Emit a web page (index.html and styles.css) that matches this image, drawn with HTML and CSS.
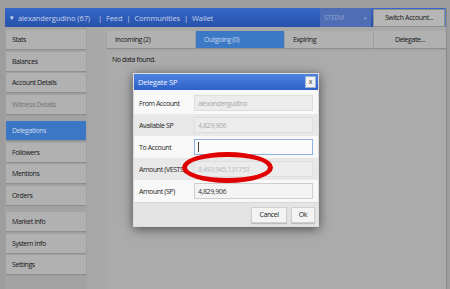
FILE: index.html
```html
<!DOCTYPE html>
<html lang="en">

<head>
    <meta charset="UTF-8">
    <title>Wallet - Delegations</title>
    <link rel="stylesheet" href="styles.css">
</head>

<body>
    <div class="window">
        <div class="topbar">
            <div class="nav">
                <span class="caret-down">&#9662;</span>
                <span class="account">alexandergudino (67)</span>
                <span class="sep">|</span>
                <span>Feed</span>
                <span class="sep">|</span>
                <span>Communities</span>
                <span class="sep">|</span>
                <span>Wallet</span>
            </div>
            <div class="chain-select">
                <span>STEEM</span>
                <span class="dot">&#9662;</span>
            </div>
            <button class="switch-btn">Switch Account...</button>
        </div>

        <div class="layout">
            <div class="sidebar">
                <div class="group">
                    <div class="side-item">Stats</div>
                    <div class="side-item">Balances</div>
                    <div class="side-item">Account Details</div>
                    <div class="side-item disabled">Witness Details</div>
                </div>
                <div class="group">
                    <div class="side-item active">Delegations</div>
                    <div class="side-item">Followers</div>
                    <div class="side-item">Mentions</div>
                    <div class="side-item">Orders</div>
                </div>
                <div class="group">
                    <div class="side-item">Market Info</div>
                    <div class="side-item">System Info</div>
                    <div class="side-item">Settings</div>
                </div>
            </div>

            <div class="main">
                <div class="tabs">
                    <div class="tab">Incoming (2)</div>
                    <div class="tab active">Outgoing (0)</div>
                    <div class="tab">Expiring</div>
                    <button class="tab delegate">Delegate...</button>
                </div>
                <div class="panel">No data found.</div>
            </div>
        </div>
    </div>

    <div class="dialog">
        <div class="dialog-title">
            <span>Delegate SP</span>
            <span class="close">x</span>
        </div>
        <div class="dialog-body">
            <div class="row">
                <label>From Account</label>
                <input class="field" type="text" value="alexandergudino" disabled>
            </div>
            <div class="row striped">
                <label>Available SP</label>
                <input class="field" type="text" value="4,829,906" disabled>
            </div>
            <div class="row">
                <label>To Account</label>
                <div class="focus-wrap">
                    <input class="field focus" type="text" value="">
                </div>
            </div>
            <div class="row striped">
                <label>Amount (VESTS)</label>
                <input class="field faint" type="text" value="8,493,945.131753" disabled>
            </div>
            <div class="row">
                <label>Amount (SP)</label>
                <input class="field value" type="text" value="4,829,906">
            </div>
        </div>
        <div class="dialog-footer">
            <button class="dlg-btn">Cancel</button>
            <button class="dlg-btn">Ok</button>
        </div>
        <div class="highlight"></div>
    </div>
</body>

</html>
```

FILE: styles.css
```css
body {
    margin: 0;
    background: #9d9d9d;
    font-family: 'Open Sans', sans-serif;
    font-size: 7px;
    letter-spacing: -0.4px;
    color: #161616;
    width: 450px;
    height: 289px;
    overflow: hidden;
    position: relative;
}

button,
input {
    font-family: inherit;
    font-size: 7px;
    letter-spacing: inherit;
}

.window {
    margin: 8px 3px 0 5px;
    height: 281px;
    background: #a8a8a8;
    border-right: 1px solid #8a8a8a;
    display: flex;
    flex-direction: column;
}

/* top bar */
.topbar {
    height: 19px;
    display: flex;
    align-items: center;
    background: linear-gradient(to bottom, #3566c8, #2752ab);
    color: #c9d3ea;
    border-right: 1px solid #5a7cc4;
}

.nav {
    flex: 1;
    display: flex;
    align-items: center;
    gap: 4px;
    padding-left: 5px;
    font-size: 7.5px;
    letter-spacing: -0.1px;
}

.caret-down {
    font-size: 7px;
    color: #d8e0f2;
}

.account {
    margin-right: 4px;
}

.chain-select {
    width: 51px;
    height: 19px;
    box-sizing: border-box;
    display: flex;
    align-items: center;
    justify-content: space-between;
    padding: 0 4px;
    background: #4e6db4;
    color: #8fa4cf;
}

.chain-select .dot {
    font-size: 5px;
}

.switch-btn {
    width: 72px;
    height: 18px;
    margin-left: 2px;
    border: 1px solid #8d8d8d;
    background: #b6b6b6;
    color: #161616;
    padding: 0;
}

/* body */
.layout {
    flex: 1;
    display: flex;
}

.sidebar {
    width: 82px;
    background: #a3a3a3;
    padding: 3px 1px 0 1px;
    box-sizing: border-box;
}

.group {
    margin-bottom: 7.5px;
}

.side-item {
    height: 19px;
    margin-bottom: 2.5px;
    line-height: 19px;
    padding-left: 6px;
    background: #b1b1b1;
    box-shadow: 0 1px 1px #8e8e8e;
}

.side-item.disabled {
    color: #767676;
}

.side-item.active {
    background: #3b77c5;
    color: #d0dcef;
}

.main {
    flex: 1;
    padding: 4px 0 0 20px;
}

.tabs {
    display: flex;
    gap: 1px;
}

.tab {
    width: 88px;
    height: 17px;
    line-height: 17px;
    padding-left: 8px;
    box-sizing: border-box;
    background: #b1b1b1;
    box-shadow: 0 1px 1px #8e8e8e;
}

.tab.active {
    background: #3b79c5;
    color: #c6d6ee;
}

.tab.delegate {
    flex: 1;
    width: auto;
    padding: 0;
    border: none;
    color: #161616;
    text-align: center;
}

.panel {
    margin-top: 3px;
    height: 230px;
    background: #ababab;
    padding: 4px 5px;
}

/* dialog */
.dialog {
    position: absolute;
    left: 133px;
    top: 73px;
    width: 186px;
    height: 154px;
    box-sizing: border-box;
    background: #f5f5f5;
    border: 1px solid #dcdcdc;
    box-shadow: 0 2px 10px rgba(0, 0, 0, 0.55);
    display: flex;
    flex-direction: column;
}

.dialog-title {
    height: 16px;
    display: flex;
    align-items: center;
    justify-content: space-between;
    padding: 0 2px 0 4px;
    background: linear-gradient(to bottom, #4d82e2, #2e61c8);
    color: #eef3ff;
    font-size: 7.5px;
    letter-spacing: -0.2px;
}

.close {
    width: 9px;
    height: 10px;
    line-height: 9px;
    text-align: center;
    background: #f2f2f2;
    border: 1px solid #9fb2d8;
    color: #333;
    font-size: 7px;
    letter-spacing: 0;
}

.dialog-body {
    padding-top: 2px;
    background: #f8f8f8;
}

.row {
    height: 22px;
    display: flex;
    align-items: center;
    padding: 0 5px;
}

.row.striped {
    background: #e8e8e8;
}

.row label {
    width: 55px;
    white-space: nowrap;
    color: #1e1e1e;
}

.field {
    width: 119px;
    height: 16px;
    box-sizing: border-box;
    border: 1px solid #dedede;
    background: #ececec;
    color: #a9a9a9;
    padding: 0 3px;
    margin: 0;
}

.field.faint {
    color: #b9b9b9;
}

.field.focus {
    background: #fafafa;
    border-color: #8fb0e2;
    outline: none;
}

.field.value {
    background: #f4f4f4;
    border-color: #cfcfcf;
    color: #333;
}

.focus-wrap {
    position: relative;
    display: flex;
}

.focus-wrap::after {
    content: "";
    position: absolute;
    left: 4px;
    top: 3px;
    width: 1px;
    height: 10px;
    background: #444;
}

.dialog-footer {
    flex: 1;
    display: flex;
    align-items: center;
    justify-content: flex-end;
    gap: 4px;
    padding-right: 3px;
    background: #e4e4e4;
    border-top: 1px solid #d6d6d6;
}

.dlg-btn {
    height: 16px;
    padding: 0 7px;
    background: #f3f3f3;
    border: 1px solid #cfcfcf;
    box-shadow: 0 1px 1px #bdbdbd;
    color: #222;
}

/* red annotation drawn over the screenshot */
.highlight {
    position: absolute;
    left: 48px;
    top: 78px;
    width: 91px;
    height: 31px;
    box-sizing: border-box;
    border: 5px solid #e00000;
    border-radius: 50%;
}
```
